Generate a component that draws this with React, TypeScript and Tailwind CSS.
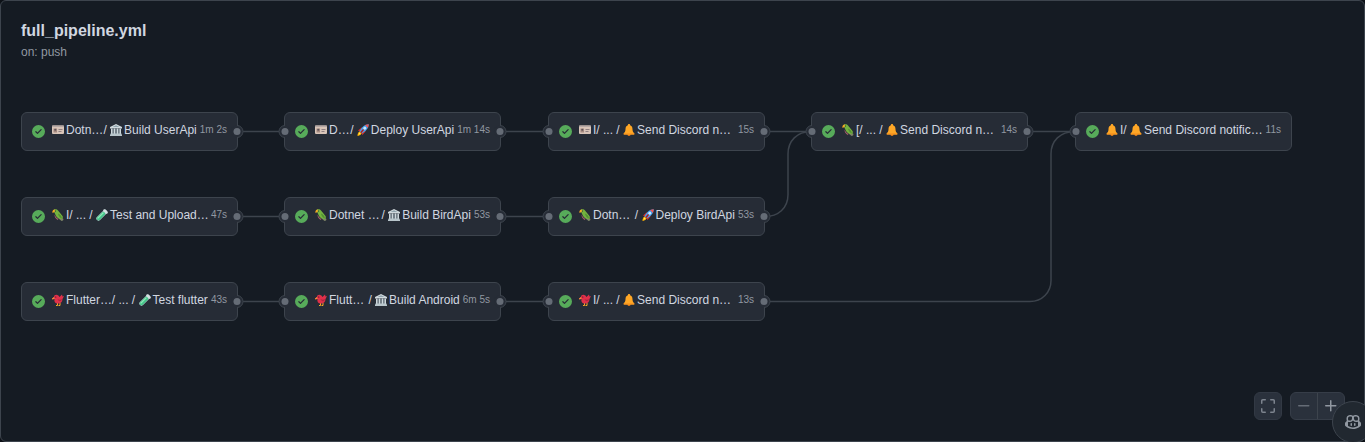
import React from "react";

type EmojiName = "id" | "building" | "rocket" | "bell" | "parrot" | "tube" | "bird";

function Emoji({ name }: { name: EmojiName }) {
  return (
    <svg viewBox="0 0 24 24" aria-hidden="true" className="mr-0.5 h-3 w-3 shrink-0">
      {name === "id" && (
        <>
          <rect x="0" y="3" width="24" height="17" rx="2" fill="#d8c4b8" />
          <rect x="0" y="3" width="24" height="3" rx="1" fill="#b5a8a5" />
          <rect x="3" y="9" width="7" height="8" fill="#a58a80" />
          <circle cx="6.5" cy="11.5" r="2" fill="#5c5258" />
          <path d="M13 11h8M13 15h6" stroke="#8f7f80" strokeWidth="2" />
        </>
      )}
      {name === "building" && (
        <>
          <path d="M12 0 24 6v3H0V6z" fill="#cfd8dc" />
          <path d="M12 2.5 19 6H5z" fill="#90a4ae" />
          <path d="M2 9h20v11H2z" fill="#56636c" />
          <path d="M3.5 9v11M9 9v11M15 9v11M20.5 9v11" stroke="#cdd7dc" strokeWidth="3" />
          <path d="M1 19h22v2h1v3H0v-3h1z" fill="#b8c5cb" />
        </>
      )}
      {name === "rocket" && (
        <>
          <path d="M2 13 9 7l6 1-7 8zM11 22l6-7-1-6-8 7z" fill="#d32f2f" />
          <path d="M23.500.5C16 1 10 5 5 15l4 4C19 14 23 8 23.500.5Z" fill="#42a5f5" />
          <path d="M23.500.5 16 2l6 6z" fill="#ef5350" />
          <circle cx="15.500" cy="8.500" r="2.800" fill="#cfe8fa" />
          <path d="m13 11-6 7" stroke="#b71c1c" strokeWidth="3" />
          <path d="m5 15 4 4c-2 4-5 4-8 5 0-4 1-7 4-9Z" fill="#ffb300" />
          <path d="m5 17 2 2-4 3z" fill="#fff176" />
        </>
      )}
      {name === "bell" && (
        <>
          <circle cx="12" cy="21" r="3" fill="#e07b16" />
          <path
            d="M12 0c1.500 0 2.300 1 2.300 2.300C18 3.500 19 7 19 10.500c0 4 1.500 6 3.500 8V21h-21v-2.500c2-2 3.500-4 3.500-8C5 7 6 3.500 9.700 2.300 9.700 1 10.500 0 12 0Z"
            fill="#ffa726"
          />
          <path d="M1.500 18.500h21V21h-21z" fill="#f9931e" />
        </>
      )}
      {name === "parrot" && (
        <>
          <path d="M14 14 23 20l-1 3-3 1-8-7z" fill="#7d8466" />
          <path d="M2 3c3-4 8-3 10 0l9 11c1 2 1 4-1 6-6 0-11-3-13-8-1-3-2-5-5-9Z" fill="#74b33f" />
          <path d="M12 9c4 1 7 5 8 10-5-2-7-5-8-10Z" fill="#528f35" />
          <path d="M5 11c2 4 4 7 8 9l-2 2c-4-3-6-6-6-11Z" fill="#a8606a" />
          <path d="M6 1C2 1 0 4 1 8l4-2z" fill="#f6a821" />
          <circle cx="7" cy="4" r="1.200" fill="#2b2b2b" />
        </>
      )}
      {name === "tube" && (
        <>
          <path d="M5 19 18 6" stroke="#a9c4c4" strokeWidth="9" strokeLinecap="round" />
          <path d="M5 19 15 9" stroke="#43c488" strokeWidth="7" strokeLinecap="round" />
          <path d="M4 18 14 8" stroke="#8ce8b8" strokeWidth="2.500" strokeLinecap="round" />
          <path d="m17 3 4 4" stroke="#d5e0e2" strokeWidth="5" strokeLinecap="round" />
        </>
      )}
      {name === "bird" && (
        <>
          <path d="M11 18v5H8M16 18v5h-3" stroke="#f9a825" strokeWidth="2" fill="none" />
          <path
            d="M0 9 4 6c0-3 3-5 6-4 3 0 4 3 5 4l5-5 1 4 3-1-3 6c0 5-3 9-9 9-6 0-8-4-7-9L0 10z"
            fill="#e0304a"
          />
          <path d="M11 10c3 2 6 2 9 0-1 5-6 7-9 0Z" fill="#b3223f" />
          <path d="m0 9 4-3 1 4-5 1z" fill="#f28a3a" />
          <circle cx="7.500" cy="6" r="1.200" fill="#30181c" />
        </>
      )}
    </svg>
  );
}

function CheckIcon() {
  return (
    <svg viewBox="0 0 16 16" role="img" aria-label="Success" className="mt-[3px] h-[13px] w-[13px] shrink-0 fill-[#57ab5a]">
      <path d="M8 16A8 8 0 1 1 8 0a8 8 0 0 1 0 16Zm3.780-9.720a.751.751 0 0 0-.018-1.042.751.751 0 0 0-1.042-.018L6.750 9.190 5.280 7.720a.751.751 0 0 0-1.042.018.751.751 0 0 0-.018 1.042l2 2a.75.75 0 0 0 1.060 0Z" />
    </svg>
  );
}

type Part = { emoji?: EmojiName; text: string; grow?: boolean };
type Job = { place: string; parts: Part[]; time: string; input?: boolean; output?: boolean };

const jobs: Job[] = [
  {
    place: "left-0 top-0",
    parts: [{ emoji: "id", text: "Dotn…", grow: true }, { emoji: "building", text: "Build UserApi" }],
    time: "1m 2s",
    output: true,
  },
  {
    place: "left-[263px] top-0",
    parts: [{ emoji: "id", text: "D…", grow: true }, { emoji: "rocket", text: "Deploy UserApi" }],
    time: "1m 14s",
    input: true,
    output: true,
  },
  {
    place: "left-[527px] top-0",
    parts: [{ emoji: "id", text: "I" }, { text: "..." }, { emoji: "bell", text: "Send Discord n…", grow: true }],
    time: "15s",
    input: true,
    output: true,
  },
  {
    place: "left-[790px] top-0",
    parts: [{ emoji: "parrot", text: "[" }, { text: "..." }, { emoji: "bell", text: "Send Discord n…", grow: true }],
    time: "14s",
    input: true,
    output: true,
  },
  {
    place: "left-[1054px] top-0",
    parts: [{ emoji: "bell", text: "I" }, { emoji: "bell", text: "Send Discord notific…", grow: true }],
    time: "11s",
    input: true,
  },
  {
    place: "left-0 top-[85px]",
    parts: [{ emoji: "parrot", text: "I" }, { text: "..." }, { emoji: "tube", text: "Test and Upload…", grow: true }],
    time: "47s",
    output: true,
  },
  {
    place: "left-[263px] top-[85px]",
    parts: [{ emoji: "parrot", text: "Dotnet …", grow: true }, { emoji: "building", text: "Build BirdApi" }],
    time: "53s",
    input: true,
    output: true,
  },
  {
    place: "left-[527px] top-[85px]",
    parts: [{ emoji: "parrot", text: "Dotn…", grow: true }, { emoji: "rocket", text: "Deploy BirdApi" }],
    time: "53s",
    input: true,
    output: true,
  },
  {
    place: "left-0 top-[170px]",
    parts: [{ emoji: "bird", text: "Flutter…", grow: true }, { text: "..." }, { emoji: "tube", text: "Test flutter" }],
    time: "43s",
    output: true,
  },
  {
    place: "left-[263px] top-[170px]",
    parts: [{ emoji: "bird", text: "Flutt…", grow: true }, { emoji: "building", text: "Build Android" }],
    time: "6m 5s",
    input: true,
    output: true,
  },
  {
    place: "left-[527px] top-[170px]",
    parts: [{ emoji: "bird", text: "I" }, { text: "..." }, { emoji: "bell", text: "Send Discord n…", grow: true }],
    time: "13s",
    input: true,
    output: true,
  },
];

function Port({ side }: { side: "in" | "out" }) {
  return (
    <svg
      viewBox="0 0 14 14"
      aria-hidden="true"
      className={side === "in" ? "absolute top-[11px] -left-[7px] h-3.5 w-3.5" : "absolute top-[11px] -right-[7px] h-3.5 w-3.5"}
    >
      <circle cx="7" cy="7.500" r="6" fill="#262c36" />
      <path
        d={side === "in" ? "M7 1.500a6 6 0 0 0 0 12" : "M7 1.500a6 6 0 0 1 0 12"}
        fill="none"
        stroke="#3d444d"
      />
      <circle cx="7" cy="7.500" r="3.500" fill="#656c76" />
    </svg>
  );
}

function JobNode({ job }: { job: Job }) {
  return (
    <a
      href="#job"
      className={`absolute flex h-[39px] w-[217px] items-start rounded-md border border-[#3d444d] bg-[#262c36] px-2.5 pt-[9px] text-xs leading-4 ${job.place}`}
    >
      <CheckIcon />
      <span className="ml-[7px] flex min-w-0 flex-1 whitespace-pre text-[#d1d7e0]">
        {job.parts.map((part, i) => (
          <React.Fragment key={i}>
            {i > 0 && <span>{job.parts[i - 1].emoji ? "/ " : " / "}</span>}
            <span className={part.grow ? "flex min-w-0 flex-1 items-center" : "flex shrink-0 items-center"}>
              {part.emoji && <Emoji name={part.emoji} />}
              <span>{part.text}</span>
            </span>
          </React.Fragment>
        ))}
      </span>
      <span className="ml-[3px] shrink-0 text-[10px] text-[#9198a1]">{job.time}</span>
      {job.input && <Port side="in" />}
      {job.output && <Port side="out" />}
    </a>
  );
}

function Connectors() {
  return (
    <svg
      viewBox="0 0 1271 209"
      aria-hidden="true"
      className="absolute left-0 top-0 h-[209px] w-[1271px] fill-none stroke-[#3d444d] stroke-[1.5]"
    >
      <path d="M217 19.500h46M480 19.500h47M744 19.500h46M1007 19.500h47" />
      <path d="M217 104.500h46M480 104.500h47M217 189.500h46M480 189.500h47" />
      <path d="M744 104.500c13 0 23-8 23-22V42c0-13 9-22.500 23-22.500" />
      <path d="M744 189.500h265c12 0 21-9 21-21V42c0-13 9-22.500 24-22.500" />
    </svg>
  );
}

const zoomButton = "flex h-[26px] items-center justify-center";

export default function App() {
  return (
    <div className="relative overflow-hidden bg-[#0d1117] font-['Liberation_Sans',Arial,sans-serif]">
      <main className="flex min-h-screen flex-col overflow-hidden rounded-md border border-[#3d444d] bg-[#151b23] pt-5 pr-[19px] pb-[21px] pl-5">
        <header>
          <h1 className="text-base leading-5 font-bold text-[#d1d7e0]">full_pipeline.yml</h1>
          <p className="mt-0.5 text-xs leading-[18px] text-[#9198a1]">on: push</p>
        </header>
        <section aria-label="Workflow graph" className="relative mt-[51px] h-[209px]">
          <Connectors />
          {jobs.map((job, i) => (
            <JobNode key={i} job={job} />
          ))}
        </section>
        <div className="mt-auto flex justify-end gap-2">
          <button
            type="button"
            aria-label="Full screen"
            className={`box-content w-[26px] rounded-md border border-[#323944] bg-[#2a313c] text-[#7d848e] ${zoomButton}`}
          >
            <svg viewBox="0 0 16 16" className="h-4 w-4 fill-current">
              <path d="M1.750 10a.75.75 0 0 1 .75.75v2.500c0 .138.112.25.25.25h2.500a.75.75 0 0 1 0 1.500h-2.500A1.750 1.750 0 0 1 1 13.250v-2.500a.75.75 0 0 1 .75-.75Zm12.500 0a.75.75 0 0 1 .75.75v2.500A1.750 1.750 0 0 1 13.250 15h-2.500a.75.75 0 0 1 0-1.500h2.500a.25.25 0 0 0 .25-.25v-2.500a.75.75 0 0 1 .75-.75ZM2.750 2.500a.25.25 0 0 0-.25.25v2.500a.75.75 0 0 1-1.500 0v-2.500C1 1.784 1.784 1 2.750 1h2.500a.75.75 0 0 1 0 1.500ZM10 1.750a.75.75 0 0 1 .75-.75h2.500c.966 0 1.750.784 1.750 1.750v2.500a.75.75 0 0 1-1.500 0v-2.500a.25.25 0 0 0-.25-.25h-2.500a.75.75 0 0 1-.75-.75Z" />
            </svg>
          </button>
          <div className="flex rounded-md border border-[#363d48] bg-[#2a313c]">
            <button type="button" aria-label="Zoom out" disabled className={`w-[26px] text-[#656c76] ${zoomButton}`}>
              <svg viewBox="0 0 16 16" className="h-4 w-4 fill-current">
                <path d="M2 7.750A.75.75 0 0 1 2.750 7h10a.75.75 0 0 1 0 1.500h-10A.75.75 0 0 1 2 7.750Z" />
              </svg>
            </button>
            <button type="button" aria-label="Zoom in" className={`w-[27px] border-l border-[#3d444d] text-[#9198a1] ${zoomButton}`}>
              <svg viewBox="0 0 16 16" className="h-4 w-4 fill-current">
                <path d="M7.750 2a.75.75 0 0 1 .75.75V7h4.250a.75.75 0 0 1 0 1.500H8.500v4.250a.75.75 0 0 1-1.500 0V8.500H2.750a.75.75 0 0 1 0-1.500H7V2.750A.75.75 0 0 1 7.750 2Z" />
              </svg>
            </button>
          </div>
        </div>
      </main>
      <button
        type="button"
        aria-label="Open Copilot"
        className="absolute -right-[9px] -bottom-px flex h-[42px] w-[42px] items-center justify-center rounded-full border border-[#3d444d] bg-[#212830] text-[#9198a1]"
      >
        <svg viewBox="0 0 16 16" className="h-4 w-4 fill-current">
          <path d="M7.998 15.035c-4.562 0-7.873-2.914-7.998-3.749V9.338c.085-.628.677-1.686 1.588-2.065.013-.07.024-.143.036-.218.029-.183.06-.384.126-.612-.201-.508-.254-1.084-.254-1.656 0-.87.128-1.769.693-2.484.579-.733 1.494-1.124 2.724-1.261 1.206-.134 2.262.034 2.944.765.05.053.096.108.139.165.044-.057.094-.112.143-.165.682-.731 1.738-.899 2.944-.765 1.230.137 2.145.528 2.724 1.261.566.715.693 1.614.693 2.484 0 .572-.053 1.148-.254 1.656.066.228.098.429.126.612.012.076.024.148.037.218.924.385 1.522 1.471 1.591 2.095v1.872c0 .766-3.351 3.795-8.002 3.795Zm0-1.485c2.280 0 4.584-1.110 5.002-1.433V7.862l-.023-.116c-.49.21-1.075.291-1.727.291-1.146 0-2.059-.327-2.710-.991A3.222 3.222 0 0 1 8 6.303a3.240 3.240 0 0 1-.544.743c-.65.664-1.563.991-2.710.991-.652 0-1.236-.081-1.727-.291l-.023.116v4.255c.419.323 2.722 1.433 5.002 1.433ZM6.762 2.830c-.193-.206-.637-.413-1.682-.297-1.019.113-1.479.404-1.713.7-.247.312-.369.789-.369 1.554 0 .793.129 1.171.308 1.371.162.181.519.379 1.442.379.853 0 1.339-.235 1.638-.54.315-.322.527-.827.617-1.553.117-.935-.037-1.395-.241-1.614Zm4.155-.297c-1.044-.116-1.488.091-1.681.297-.204.219-.359.679-.242 1.614.091.726.303 1.231.618 1.553.299.305.784.54 1.638.54.922 0 1.280-.198 1.442-.379.179-.2.308-.578.308-1.371 0-.765-.123-1.242-.37-1.554-.233-.296-.693-.587-1.713-.7Z" />
          <path d="M6.250 9.037a.75.75 0 0 1 .75.75v1.501a.75.75 0 0 1-1.500 0V9.787a.75.75 0 0 1 .75-.75Zm4.250.75v1.501a.75.75 0 0 1-1.500 0V9.787a.75.75 0 0 1 1.500 0Z" />
        </svg>
      </button>
    </div>
  );
}
